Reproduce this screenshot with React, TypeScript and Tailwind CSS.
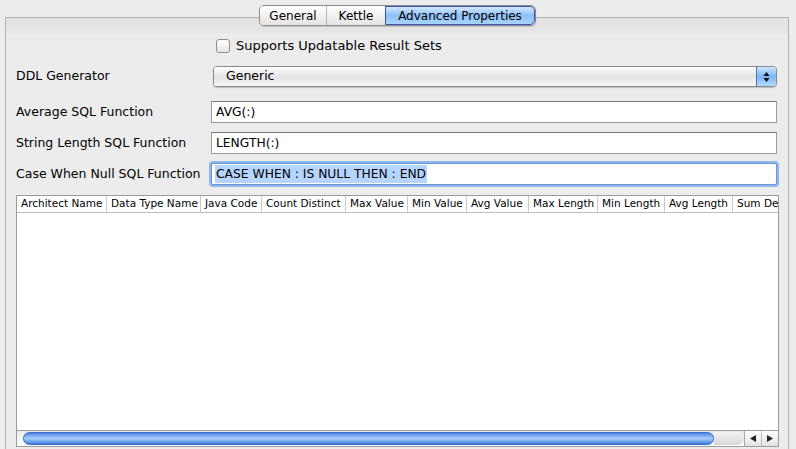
import React from "react";

const columns = [
  { name: "Architect Name", w: 90 },
  { name: "Data Type Name", w: 94 },
  { name: "Java Code", w: 61 },
  { name: "Count Distinct", w: 84 },
  { name: "Max Value", w: 62 },
  { name: "Min Value", w: 59 },
  { name: "Avg Value", w: 62 },
  { name: "Max Length", w: 69 },
  { name: "Min Length", w: 67 },
  { name: "Avg Length", w: 68 },
  { name: "Sum Decimal", w: 80 },
];

const Field = ({ label, value, focused }: { label: string; value: string; focused?: boolean }) => {
  return (
    <div className="flex items-center h-[22px] pl-[10px] pr-[11px]">
      <div className="w-[195px] shrink-0 text-[12.5px]">{label}</div>
      {focused ? (
        <div className="flex-1 h-[22px] rounded-[2px] bg-white border border-[#6b95d6] shadow-[0_0_0_2px_#8fb7ec] flex items-center pl-[3px] text-[12.3px]">
          <span className="bg-[#b5d5ff] px-[1px] leading-[18px]">{value}</span>
        </div>
      ) : (
        <div className="flex-1 h-[22px] bg-white border border-[#9a9a9a] border-t-[#7a7a7a] flex items-center pl-[4px] text-[12.3px]">
          {value}
        </div>
      )}
    </div>
  );
};

const App = () => {
  return (
    <div
      className="w-[796px] h-[449px] bg-[#ececec] overflow-hidden text-[12px] text-black flex flex-col"
      style={{ fontFamily: '"DejaVu Sans", Verdana, sans-serif' }}
    >
      {/* tabs */}
      <div className="relative z-10 flex pl-[259px] pt-[5px] -mb-[9px]">
        <div className="flex h-[21px] rounded-[5px] border border-[#8c8c8c] overflow-hidden shadow-[0_1px_1px_rgba(0,0,0,0.15)]">
          <div className="w-[67px] flex items-center justify-center bg-gradient-to-b from-white to-[#e4e4e4] border-r border-[#b5b5b5]">
            General
          </div>
          <div className="w-[58px] flex items-center justify-center bg-gradient-to-b from-white to-[#e4e4e4]">
            Kettle
          </div>
          <div className="w-[150px] flex items-center justify-center bg-gradient-to-b from-[#d4e8ff] via-[#8cc0f8] to-[#a9d4ff] border border-[#3d4fb0] rounded-r-[5px]">
            Advanced Properties
          </div>
        </div>
      </div>

      {/* panel */}
      <div className="flex-1 ml-[5px] mr-[7px] border border-[#b2b2b2] border-b-0 flex flex-col">
        <div className="h-[15px] bg-gradient-to-b from-[#e2e2e2] to-[#e6e6e6]" />

        <div className="flex items-center h-[16px] mt-[5px] pl-[210px]">
          <div className="w-[14px] h-[14px] rounded-[3px] border border-[#8e8e8e] bg-gradient-to-b from-white to-[#e6e6e6]" />
          <span className="ml-[6px] text-[13px]">Supports Updatable Result Sets</span>
        </div>

        <div className="flex items-center h-[21px] mt-[12px] pl-[10px] pr-[11px]">
          <div className="w-[197px] shrink-0 text-[12.5px]">DDL Generator</div>
          <div className="flex-1 h-[21px] flex rounded-[4px] border border-[#8a8a8a] overflow-hidden shadow-[0_1px_1px_rgba(0,0,0,0.2)]">
            <div className="flex-1 flex items-center pl-[12px] bg-gradient-to-b from-white via-[#e4e4e4] to-[#f6f6f6] text-[12.5px]">
              Generic
            </div>
            <div className="w-[20px] flex flex-col items-center justify-center bg-gradient-to-b from-[#cfe4ff] via-[#7db6f5] to-[#b4dbff] border-l border-[#4f6fb8]">
              <svg width="7" height="12" viewBox="0 0 7 12">
                <path d="M3.5 1 L6.5 5 L0.5 5 Z" fill="#111" />
                <path d="M0.5 7 L6.5 7 L3.5 11 Z" fill="#111" />
              </svg>
            </div>
          </div>
        </div>

        <div className="mt-[14px]">
          <Field label="Average SQL Function" value="AVG(:)" />
        </div>
        <div className="mt-[9px]">
          <Field label="String Length SQL Function" value="LENGTH(:)" />
        </div>
        <div className="mt-[9px]">
          <Field label="Case When Null SQL Function" value="CASE WHEN : IS NULL THEN : END" focused />
        </div>

        {/* table */}
        <div className="mt-[10px] ml-[10px] mr-[9px] h-[252px] border border-[#9b9b9b] bg-white flex flex-col">
          <div className="flex h-[17px] border-b border-[#bdbdbd] text-[10.5px] overflow-hidden shrink-0">
            {columns.map((c, i) => (
              <div
                key={c.name}
                className={`shrink-0 flex items-center pl-[4px] whitespace-nowrap overflow-hidden ${i < columns.length - 1 ? "border-r border-[#c8c8c8]" : ""}`}
                style={{ width: c.w }}
              >
                {c.name}
              </div>
            ))}
          </div>
          <div className="flex-1" />
          {/* horizontal scrollbar */}
          <div className="h-[16px] flex border-t border-[#9c9c9c] bg-gradient-to-b from-[#e9e9e9] to-white">
            <div className="w-[6px]" />
            <div className="w-[691px] my-[1px] rounded-full border border-[#3b66c4] bg-gradient-to-b from-[#4f86e6] via-[#a8cdfb] to-[#3f7ee2]" />
            <div className="w-[30px] my-[1px] rounded-r-full bg-gradient-to-b from-[#f4f4f4] to-[#d8d8d8]" />
            <div className="flex-1 flex border-l border-[#a8a8a8]">
              <div className="flex-1 flex items-center justify-center border-r border-[#c2c2c2] bg-gradient-to-b from-white to-[#e2e2e2]">
                <svg width="6" height="7" viewBox="0 0 6 7">
                  <path d="M0 3.5 L6 0 L6 7 Z" fill="#222" />
                </svg>
              </div>
              <div className="flex-1 flex items-center justify-center bg-gradient-to-b from-white to-[#e2e2e2]">
                <svg width="6" height="7" viewBox="0 0 6 7">
                  <path d="M6 3.5 L0 0 L0 7 Z" fill="#222" />
                </svg>
              </div>
            </div>
          </div>
        </div>
      </div>
    </div>
  );
};

export default App;
